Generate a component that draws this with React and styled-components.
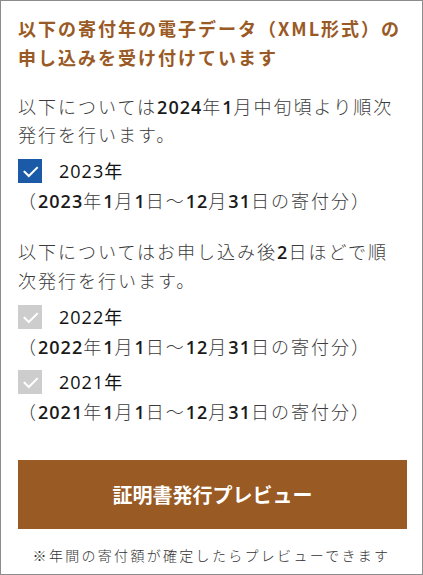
import React, { useState } from "react";
import styled, { createGlobalStyle } from "styled-components";

const GlobalStyle = createGlobalStyle`
  html, body {
    margin: 0;
    padding: 0;
    background: #ffffff;
  }
  * {
    box-sizing: border-box;
  }
`;

const BROWN = "#9a5a25";
const JP = `"Noto Sans CJK JP", "Noto Sans", sans-serif`;

const Panel = styled.div`
  min-height: 100vh;
  border: 1px solid #8c8c8c;
  padding: 13px 15px 0 17px;
  font-family: ${JP};
  background: #fff;
`;

const Title = styled.h2`
  margin: 0 0 20px;
  font-size: 18px;
  line-height: 28.8px;
  font-weight: 700;
  letter-spacing: 2px;
  color: ${BROWN};
`;

const Lead = styled.p`
  margin: ${(p) => (p.$first ? "0" : "23px 0 0")};
  font-size: 18px;
  line-height: 28.8px;
  font-weight: 300;
  letter-spacing: 2px;
  color: #3c3c3c;
`;

/* 数字だけ欧文フォントで少し濃く */
const Num = styled.span`
  font-family: "Open Sans", "Noto Sans", sans-serif;
  font-weight: 600;
  color: #1a1a1a;
  letter-spacing: 1px;
  line-height: 1;
`;

const YearGroup = styled.div`
  margin-top: 6.5px;
`;

const CheckRow = styled.label`
  display: flex;
  align-items: center;
  height: 30px;
  gap: 17px;
  cursor: ${(p) => (p.$disabled ? "default" : "pointer")};
`;

const Box = styled.span`
  width: 24px;
  height: 24px;
  flex: none;
  display: flex;
  align-items: center;
  justify-content: center;
  background: ${(p) => (p.$disabled ? "#cdcdcd" : p.$checked ? "#1b5aa6" : "#fff")};
  border: ${(p) => (p.$checked || p.$disabled ? "none" : "1px solid #999")};

  svg {
    display: block;
  }
`;

const YearLabel = styled.span`
  font-size: 18px;
  line-height: 1;
  letter-spacing: 1px;
  color: #111;
  font-family: "Open Sans", "Noto Sans", sans-serif;

  span {
    font-family: ${JP};
    font-weight: 400;
  }
`;

const Period = styled.div`
  font-size: 18px;
  line-height: 28.8px;
  font-weight: 300;
  letter-spacing: 2px;
  color: #3c3c3c;
`;

const PreviewButton = styled.button`
  display: block;
  width: 389px;
  height: 69px;
  margin-top: 34px;
  border: none;
  border-radius: 0;
  background: #995a24;
  color: #fff;
  font-family: ${JP};
  font-size: 20px;
  font-weight: 700;
  letter-spacing: 0;
  cursor: pointer;
`;

const Note = styled.p`
  margin: 14px 0 0;
  text-align: center;
  font-size: 14px;
  line-height: 24px;
  font-weight: 300;
  letter-spacing: 2.3px;
  color: #333;
  padding-right: 2px;
`;

const Check = () => (
  <svg width="24" height="24" viewBox="0 0 24 24">
    <polyline
      points="6.5,12.8 10.8,17 19,8.8"
      fill="none"
      stroke="#fff"
      strokeWidth="2"
      strokeLinecap="square"
    />
  </svg>
);

const YearItem = ({ year, checked, disabled, onToggle }) => (
  <YearGroup>
    <CheckRow $disabled={disabled} onClick={disabled ? undefined : onToggle}>
      <Box $checked={checked} $disabled={disabled}>
        {(checked || disabled) && <Check />}
      </Box>
      <YearLabel>
        {year}
        <span>年</span>
      </YearLabel>
    </CheckRow>
    <Period>
      （<Num>{year}</Num>年<Num>1</Num>月<Num>1</Num>日～<Num>12</Num>月
      <Num>31</Num>日の寄付分）
    </Period>
  </YearGroup>
);

const App = () => {
  const [picked, setPicked] = useState(true);

  return (
    <>
      <GlobalStyle />
      <Panel>
        <Title>以下の寄付年の電子データ（XML形式）の申し込みを受け付けています</Title>

        <Lead $first>
          以下については<Num>2024</Num>年<Num>1</Num>月中旬頃より順次発行を行います。
        </Lead>
        <YearItem year="2023" checked={picked} onToggle={() => setPicked(!picked)} />

        <Lead>
          以下についてはお申し込み後<Num>2</Num>日ほどで順次発行を行います。
        </Lead>
        <YearItem year="2022" disabled />
        <YearItem year="2021" disabled />

        <PreviewButton type="button">証明書発行プレビュー</PreviewButton>
        <Note>※年間の寄付額が確定したらプレビューできます</Note>
      </Panel>
    </>
  );
};

export default App;
